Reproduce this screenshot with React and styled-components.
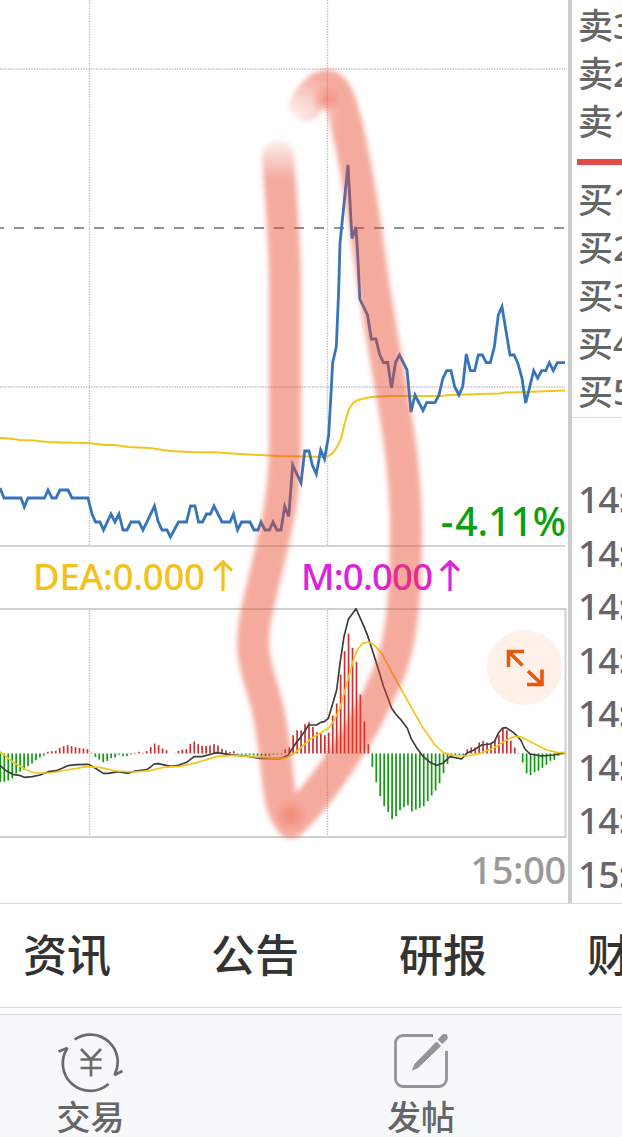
import React from "react";
import styled, { createGlobalStyle } from "styled-components";

const PRICE =
  "0,488 4,498 21,498 24.3,507 28,498 44.5,498 48,490 52,498 56,498 60,490 68,490 72,498 88,498 92,514 95.5,522 100,522 103.5,530 111,514 115,522 119,514 123,530 127,530 131,522 139,522 143,530 154.5,506 158,521 162,530 167,530 170.5,537 178.5,522 186.5,522 190.5,506 195,506 198.5,522 202.5,522 206.5,514 210.5,514 214,506 222,522 230,522 233.5,514 237.5,530 241.5,522 250,522 254,530 258,530 261,522 265,530 269.5,530 273,522 277,530 281,530 284.7,506.5 288.7,516.5 292.7,465 301,483 304.7,451 309,451 312.3,465 316.3,474 320.7,450 324.5,459 328.7,435 332.7,362.5 336.3,346.7 338.7,290 340,243 348,165 352,238.5 356,227 358,260 359.8,299 367.5,315 371.3,339 376,339 379.5,354 383.3,362.5 387.7,362.5 391.5,388 395.5,362.5 399.5,355 407,370 411,412 415,395 423,410.5 426.7,402.7 435,402.7 439,395 442.7,379 446.7,370.7 451,370.7 454.7,386.7 459,395 462.7,386.7 466.3,354 470.3,370.7 474.7,370.7 478.3,355 482.3,355 486.3,362.7 490.3,362.7 494.3,347.3 498.3,315 502,306.7 510,355 514,355 517.7,362.7 522,378.3 525.7,403 533.7,370.7 537.7,378.3 541.7,370.7 545.7,370.7 549.3,362.7 553.3,370.7 557.3,362.7 565,362.7";

const AVERAGE =
  "0,438 10,438.5 20,440 33,440.5 48,442 62,442.5 88,443 105,445 115,445 128,447 150,448 170,451 190,452 218,452.5 240,454 260,455 280,456 305,456.5 320,457 328,456 333,453 337,447 341,439 345,422 349,409 353,403 358,400 364,398.5 371,397 390,396 440,396 450,395 480,394 500,393.5 505,392.5 525,392 565,390.5";

// MACD bars, in thirds of a pixel, one per two minutes
const BARS = [
  -85, -85, -81, -74, -60, -54, -50, -38, -30, -20, -12, -6, 5, 7, 8, 17, 22,
  25, 22, 19, 17, 15, 13, 2, -10, -18, -26, -22, -14, -12, -4, -8, -8, -3, 2, 5,
  2, 7, 19, 30, 25, 15, 10, 0, 1, 8, 11, 13, 29, 36, 28, 23, 23, 24, 28, 24, 14,
  9, 5, 7, -3, -4, -4, -4, -6, -7, -8, -8, -7, -3, -3, -3, 12, 18, 55, 70, 69,
  88, 94, 80, 64, 60, 55, 62, 114, 150, 237, 307, 359, 317, 275, 177, 96, 28,
  -40, -86, -128, -158, -175, -197, -188, -170, -161, -155, -174, -168, -163,
  -158, -143, -126, -111, -89, -59, -31, -12, -6, -5, -5, 13, 18, 18, 33, 38,
  33, 30, 38, 55, 77, 70, 38, 18, -1, -27, -59, -65, -56, -52, -43, -34, -22,
  -19, -7, -3,
];

const DIF =
  "0,496 15,510 38,523 62,527 73,532 97,530 120,525 145,515 170,512 203,497 230,494 265,493 285,504 310,520 325,520 355,515 385,520 405,513 440,509 452,501 462,492 475,491 512,499 535,496 560,487 582,470 605,470 635,462 650,458 690,464 750,470 780,475 840,476 864,466 890,426 900,415 926,375 950,375 962,367 973,365 985,355 997,315 1010,270 1020,190 1032,110 1045,58 1068,26 1092,80 1104,110 1128,185 1151,260 1175,325 1187,342 1205,362 1222,385 1233,415 1251,445 1270,470 1290,487 1310,496 1328,490 1350,470 1385,477 1400,460 1420,451 1445,435 1470,432 1483,425 1495,400 1508,384 1518,383 1540,397 1553,410 1562,420 1575,447 1590,462 1625,468 1660,465 1695,458";

const DEA =
  "0,455 40,487 80,510 105,519 150,519 200,510 260,500 300,502 350,513 400,516 450,512 490,502 540,499 590,488 650,470 700,466 780,472 840,476 860,472 880,462 900,445 935,415 985,385 1000,365 1020,325 1045,235 1060,180 1072,150 1088,130 1104,126 1120,132 1145,160 1180,225 1230,315 1270,385 1305,435 1330,458 1365,467 1400,468 1440,460 1480,445 1520,420 1545,409 1565,411 1600,430 1640,450 1670,457 1695,458";

const SELLS = ["卖3", "卖2", "卖1"];
const BUYS = ["买1", "买2", "买3", "买4", "买5"];
const TICKS = ["14:5", "14:5", "14:5", "14:5", "14:5", "14:5", "14:5", "15:0"];
const TABS = ["资讯", "公告", "研报", "财务"];

const ArrowUp = () => (
  <svg width="20" height="32" viewBox="0 0 20 32" fill="none">
    <path d="M10 31V2M1 10.5L10 1.8L19 10.5" stroke="currentColor" strokeWidth="3.2" />
  </svg>
);

const ExpandIcon = () => (
  <svg width="38" height="38" viewBox="0 0 38 38" fill="none" stroke="#e8590c" strokeWidth="3.6">
    <path d="M18 2.500H2.500V18M3 3L16.500 16.500" />
    <path d="M21 35.500H36V20.500M35.500 35L22 22" />
  </svg>
);

const TradeIcon = () => (
  <svg width="66" height="60" viewBox="0 0 66 60" fill="none" stroke="#6b6b6b" strokeWidth="2.7">
    <path d="M16.500 6.500A27.500 27.500 0 0 1 56.500 42L64.500 38" strokeLinejoin="bevel" />
    <path d="M50.500 51A27.500 27.500 0 0 1 9.500 15L0.500 18.500" strokeLinejoin="bevel" />
    <path d="M23 16L33 26.500L43 16M33 26V43.500M22.500 26.500H43.500M22.500 35H43.500" />
  </svg>
);

const PostIcon = () => (
  <svg width="56" height="56" viewBox="0 0 56 56" fill="none">
    <path
      d="M40 2.500H10A7.500 7.500 0 0 0 2.500 10V46A7.500 7.500 0 0 0 10 53.500H46A7.500 7.500 0 0 0 53.500 46V18"
      stroke="#949498"
      strokeWidth="2.8"
    />
    <path d="M43.500 9L47.500 13L25 34.500L19.500 37L22 31Z" fill="#949498" stroke="#949498" />
    <path d="M47 8.800L51.500 4.300" stroke="#949498" strokeWidth="6.500" />
    <circle cx="51.500" cy="4.300" r="3.200" fill="#949498" />
  </svg>
);

const PriceChart = () => (
  <Plot width="568" height="547" viewBox="0 0 568 547" fill="none">
    <g stroke="#c4c4c4" strokeWidth="1.3" strokeDasharray="1.5 1.1">
      <path d="M0 69H565M0 387H565M89.500 0V545M327.500 0V545" />
    </g>
    <path d="M-6 228H565" stroke="#929292" strokeWidth="2" strokeDasharray="10 10" />
    <path d="M0 546H565" stroke="#d4d4d4" strokeWidth="2" />
    <polyline points={AVERAGE} stroke="#f3c51f" strokeWidth="2" />
    <polyline points={PRICE} stroke="#3675b9" strokeWidth="2.8" />
  </Plot>
);

const MacdChart = () => (
  <Plot width="568" height="230" viewBox="0 608 568 230" fill="none">
    <path
      d="M89.500 610V836M327.500 610V836"
      stroke="#c4c4c4"
      strokeWidth="1.3"
      strokeDasharray="1.5 1.1"
    />
    <path d="M0 609H565.500V837H0" stroke="#d0d0d0" strokeWidth="2" />
    {BARS.map((value, i) => (
      <rect
        key={i}
        x={-0.5 + i * 3.957}
        y={value > 0 ? 753.5 - value / 3 : 753.5}
        width="1.7"
        height={Math.abs(value) / 3}
        fill={value > 0 ? "#cc3030" : "#0f9a0f"}
      />
    ))}
    <g transform="translate(0 600) scale(.33333)" strokeLinejoin="round">
      <polyline points={DIF} stroke="#3b3b3b" strokeWidth="5" />
      <polyline points={DEA} stroke="#f3c51f" strokeWidth="5" />
    </g>
  </Plot>
);

const MarkerStroke = () => (
  <Marker width="568" height="903" viewBox="0 0 568 903" fill="none">
    <defs>
      <filter id="soft" filterUnits="userSpaceOnUse" x="200" y="40" width="260" height="820">
        <feGaussianBlur stdDeviation="2.6" />
      </filter>
      <linearGradient id="fadeLeft" gradientUnits="userSpaceOnUse" x1="0" y1="138" x2="0" y2="178">
        <stop offset="0" stopColor="#e9442c" stopOpacity=".1" />
        <stop offset="1" stopColor="#e9442c" />
      </linearGradient>
      <radialGradient id="fadeTip" gradientUnits="userSpaceOnUse" cx="298" cy="114" r="42">
        <stop offset="0" stopColor="#e9442c" stopOpacity=".2" />
        <stop offset="1" stopColor="#e9442c" />
      </radialGradient>
      <radialGradient id="dab">
        <stop offset="0" stopColor="#ee5a40" stopOpacity=".4" />
        <stop offset="1" stopColor="#ee5a40" stopOpacity="0" />
      </radialGradient>
    </defs>
    <g opacity=".45" filter="url(#soft)" strokeWidth="32" strokeLinecap="round" strokeLinejoin="round">
      <path
        d="M278 156C281 200 285 240 285 290V440C285 495 277 525 270 555C262 592 253 618 253 643C253 665 262 685 267 706C275 740 276 770 280 795C282 808 286 816 291 822"
        stroke="url(#fadeLeft)"
      />
      <path
        d="M306 105C312 94 318 87 327 86C338 87 344 112 350 140C357 172 364 215 370 260C377 310 384 348 391 388C397 425 406 470 406 530C406 600 401 645 388 675C375 705 360 733 343 757C325 785 308 806 291 822"
        stroke="url(#fadeTip)"
      />
    </g>
    <circle cx="326" cy="99" r="15" fill="url(#dab)" />
    <circle cx="291" cy="815" r="17" fill="url(#dab)" />
  </Marker>
);

const App = () => {
  return (
    <Screen>
      <GlobalStyle />
      <Quote>
        <Charts>
          <PricePane>
            <PriceChart />
            <Change>-4.11%</Change>
          </PricePane>
          <Legend>
            <Indicator $color="#f3c11b" $width="268px">
              DEA:0.000
              <ArrowUp />
            </Indicator>
            <Indicator $color="#dc22dc" $spacing="-0.8px">
              M:0.000
              <ArrowUp />
            </Indicator>
          </Legend>
          <MacdPane>
            <MacdChart />
            <Expand>
              <ExpandIcon />
            </Expand>
          </MacdPane>
          <TimeAxis>15:00</TimeAxis>
          <MarkerStroke />
        </Charts>
        <Book>
          <Levels>
            {SELLS.map((label) => (
              <Level key={label}>{label}</Level>
            ))}
            <Divider />
            {BUYS.map((label) => (
              <Level key={label}>{label}</Level>
            ))}
          </Levels>
          <Trades>
            {TICKS.map((tick, i) => (
              <Tick key={i}>{tick}</Tick>
            ))}
          </Trades>
        </Book>
      </Quote>
      <Tabs>
        {TABS.map((tab) => (
          <Tab key={tab}>{tab}</Tab>
        ))}
      </Tabs>
      <BottomBar>
        <Action $width="181px">
          <TradeIcon />
          交易
        </Action>
        <Action $width="480px">
          <PostIcon />
          发帖
        </Action>
      </BottomBar>
    </Screen>
  );
};

export default App;

const GlobalStyle = createGlobalStyle`
  * {
    box-sizing: border-box;
  }
  body {
    margin: 0;
    background: #fff;
    font-family: "Noto Sans", "Noto Sans CJK SC", sans-serif;
  }
  svg {
    display: block;
    flex-shrink: 0;
  }
`;
const Screen = styled.div`
  display: flex;
  flex-direction: column;
  width: 622px;
  height: 1137px;
  overflow: hidden;
`;
const Quote = styled.div`
  display: flex;
  height: 903px;
`;
const Charts = styled.div`
  position: relative;
  width: 568px;
  flex-shrink: 0;
`;
const Plot = styled.svg`
  overflow: hidden;
`;
const PricePane = styled.div`
  position: relative;
  height: 547px;
`;
const Change = styled.div`
  position: absolute;
  right: 2px;
  bottom: 6px;
  color: #0aa00a;
  font-size: 39px;
  font-weight: 500;
  line-height: 40px;
  &::first-letter {
    letter-spacing: 2px;
  }
`;
const Legend = styled.div`
  display: flex;
  height: 61px;
  padding-left: 33px;
`;
const Indicator = styled.div`
  display: flex;
  align-items: center;
  gap: 8px;
  width: ${(props) => props.$width || "auto"};
  height: 58px;
  color: ${(props) => props.$color};
  font-size: 36.5px;
  font-weight: 500;
  letter-spacing: ${(props) => props.$spacing || "-0.3px"};
  line-height: 56px;
`;
const MacdPane = styled.div`
  position: relative;
  height: 230px;
`;
const Expand = styled.div`
  position: absolute;
  top: 22px;
  left: 487px;
  display: flex;
  align-items: center;
  justify-content: center;
  width: 75px;
  height: 75px;
  border-radius: 50%;
  background: #fff0e9;
`;
const TimeAxis = styled.div`
  height: 65px;
  padding-right: 2px;
  color: #999;
  font-size: 38px;
  font-weight: 500;
  letter-spacing: -0.3px;
  line-height: 63px;
  text-align: right;
`;
const Marker = styled.svg`
  position: absolute;
  top: 0;
  left: 0;
  pointer-events: none;
`;
const Book = styled.div`
  flex: 1;
  border-left: 4px solid #ccc;
  overflow: hidden;
  white-space: nowrap;
`;
const Levels = styled.div`
  height: 418px;
  padding-top: 2px;
  border-bottom: 1px solid #dcdce0;
`;
const Level = styled.div`
  height: 48px;
  padding-left: 6px;
  color: #666;
  font-size: 35px;
  font-weight: 500;
  line-height: 48px;
`;
const Divider = styled.div`
  height: 6px;
  margin: 13px 0 11px 5px;
  background: #e34a4a;
`;
const Trades = styled.div`
  padding-top: 54px;
`;
const Tick = styled.div`
  height: 53.5px;
  padding-left: 6px;
  color: #666;
  font-size: 37px;
  font-weight: 500;
  letter-spacing: -1px;
  line-height: 53.5px;
`;
const Tabs = styled.div`
  display: flex;
  gap: 100px;
  height: 105px;
  padding-left: 23px;
  border-top: 1px solid #dedede;
  border-bottom: 1px solid #dedede;
  white-space: nowrap;
`;
const Tab = styled.div`
  flex-shrink: 0;
  color: #333;
  font-family: "Noto Sans CJK SC", sans-serif;
  font-size: 44px;
  font-weight: 500;
  line-height: 99px;
`;
const BottomBar = styled.div`
  display: flex;
  flex: 1;
  margin-top: 6px;
  border-top: 1px solid #d6d8dc;
  background: #f7f8fa;
`;
const Action = styled.div`
  display: flex;
  flex-direction: column;
  align-items: center;
  justify-content: space-between;
  flex-shrink: 0;
  width: ${(props) => props.$width};
  height: 122px;
  padding-top: 18px;
  color: #666;
  font-family: "Noto Sans CJK SC", sans-serif;
  font-size: 34px;
  font-weight: 500;
  line-height: 42px;
`;
